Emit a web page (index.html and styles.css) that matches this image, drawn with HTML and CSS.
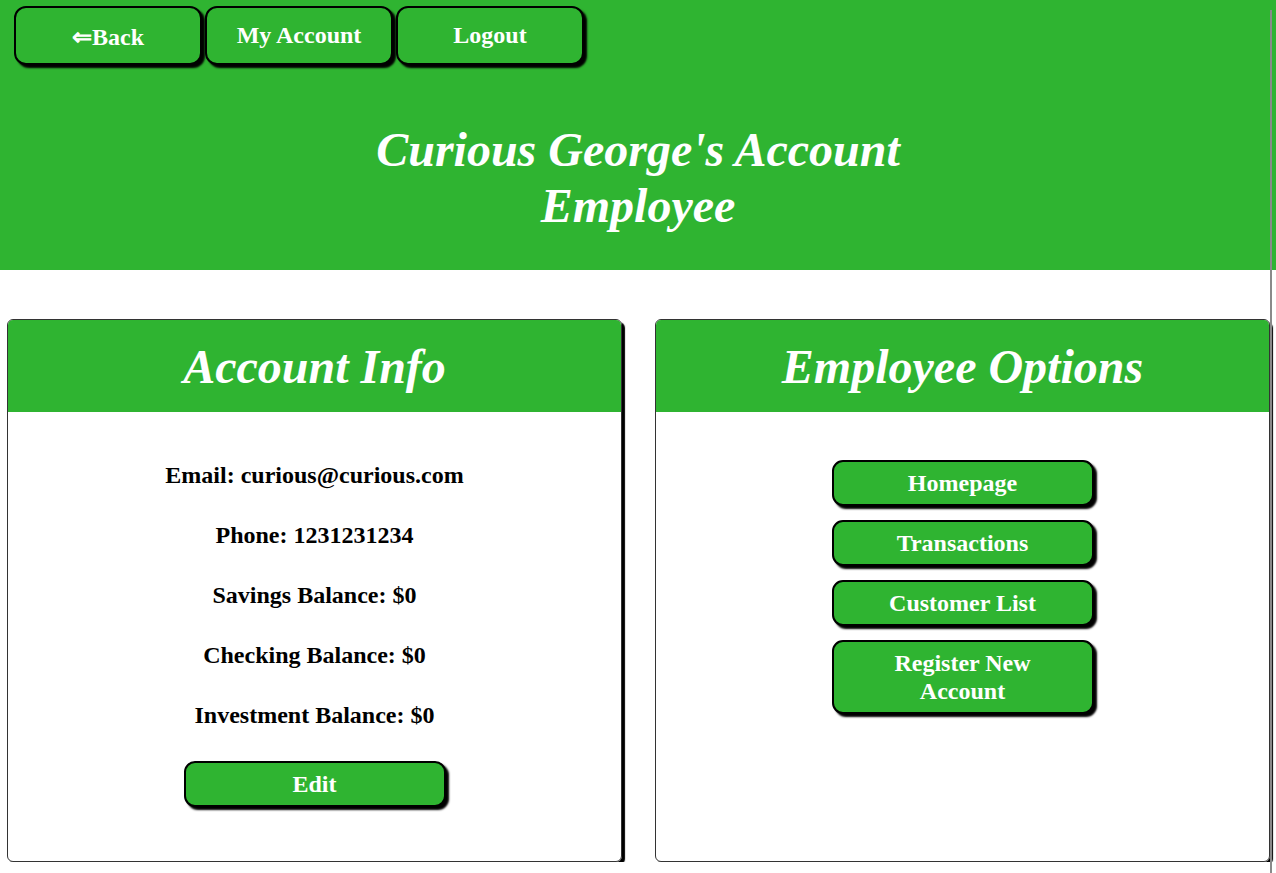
FILE: index.html
```html
<!DOCTYPE html>
<html lang="en">
<head>
<meta charset="utf-8">
<title>Curious George's Account</title>
<link rel="stylesheet" href="styles.css">
</head>
<body>
<header class="top">
  <nav class="nav">
    <button class="btn nav-btn">&lArr;Back</button>
    <button class="btn nav-btn">My Account</button>
    <button class="btn nav-btn">Logout</button>
  </nav>
  <h1 class="title">Curious George's Account<br>Employee</h1>
</header>
<main class="cards">
  <section class="card">
    <h2 class="card-head">Account Info</h2>
    <div class="card-body info">
      <p>Email: curious@curious.com</p>
      <p>Phone: 1231231234</p>
      <p>Savings Balance: $0</p>
      <p>Checking Balance: $0</p>
      <p>Investment Balance: $0</p>
      <button class="btn wide-btn">Edit</button>
    </div>
  </section>
  <section class="card">
    <h2 class="card-head">Employee Options</h2>
    <div class="card-body options">
      <button class="btn wide-btn">Homepage</button>
      <button class="btn wide-btn">Transactions</button>
      <button class="btn wide-btn">Customer List</button>
      <button class="btn wide-btn">Register New<br>Account</button>
    </div>
  </section>
</main>
<div class="scroll-edge"></div>
</body>
</html>
```
FILE: styles.css
```css
html, body {
  margin: 0;
  padding: 0;
  background: #ffffff;
}
body {
  font-family: "Liberation Serif", "Times New Roman", serif;
  color: #000;
  overflow: hidden;
}
.top {
  background: #2fb431;
  padding: 6px 0 36px 14px;
}
.nav {
  display: flex;
  gap: 3px;
}
.btn {
  font-family: "Liberation Serif", "Times New Roman", serif;
  font-weight: bold;
  font-size: 24px;
  color: #ffffff;
  background: #2fb431;
  border: 2px solid #000;
  box-shadow: 3px 3px 2px #000;
  cursor: pointer;
  padding: 0;
}
.nav-btn {
  width: 188px;
  height: 59px;
  border-radius: 12px;
  line-height: 28px;
  padding-top: 2px;
}
.nav-btn + .nav-btn {
  padding-top: 0;
  padding-bottom: 2px;
}
.title {
  margin: 57px 14px 0 0;
  text-align: center;
  color: #fff;
  font-style: italic;
  font-weight: bold;
  font-size: 48px;
  line-height: 56px;
}
.cards {
  display: grid;
  grid-template-columns: 615px 615px;
  column-gap: 33px;
  padding: 49px 0 0 7px;
}
.card {
  height: 543px;
  box-sizing: border-box;
  border: 1px solid #333;
  border-radius: 6px;
  box-shadow: 3px 3px 1px #000;
  overflow: hidden;
  display: flex;
  flex-direction: column;
}
.card-head {
  margin: 0;
  height: 92px;
  background: #2fb431;
  color: #fff;
  font-style: italic;
  font-weight: bold;
  font-size: 48px;
  display: flex;
  align-items: center;
  justify-content: center;
}
.card-body {
  display: flex;
  flex-direction: column;
  align-items: center;
}
.info {
  padding-top: 49px;
}
.info p {
  margin: 0 0 32px;
  font-weight: bold;
  font-size: 24px;
  line-height: 28px;
}
.wide-btn {
  width: 262px;
  height: 46px;
  border-radius: 11px;
  line-height: 28px;
}
.options {
  padding-top: 48px;
  gap: 14px;
}
.options .wide-btn:last-child {
  height: 74px;
}
.scroll-edge {
  position: fixed;
  top: 10px;
  bottom: 0;
  right: 4px;
  width: 2px;
  background: #8a8a8a;
}
```
